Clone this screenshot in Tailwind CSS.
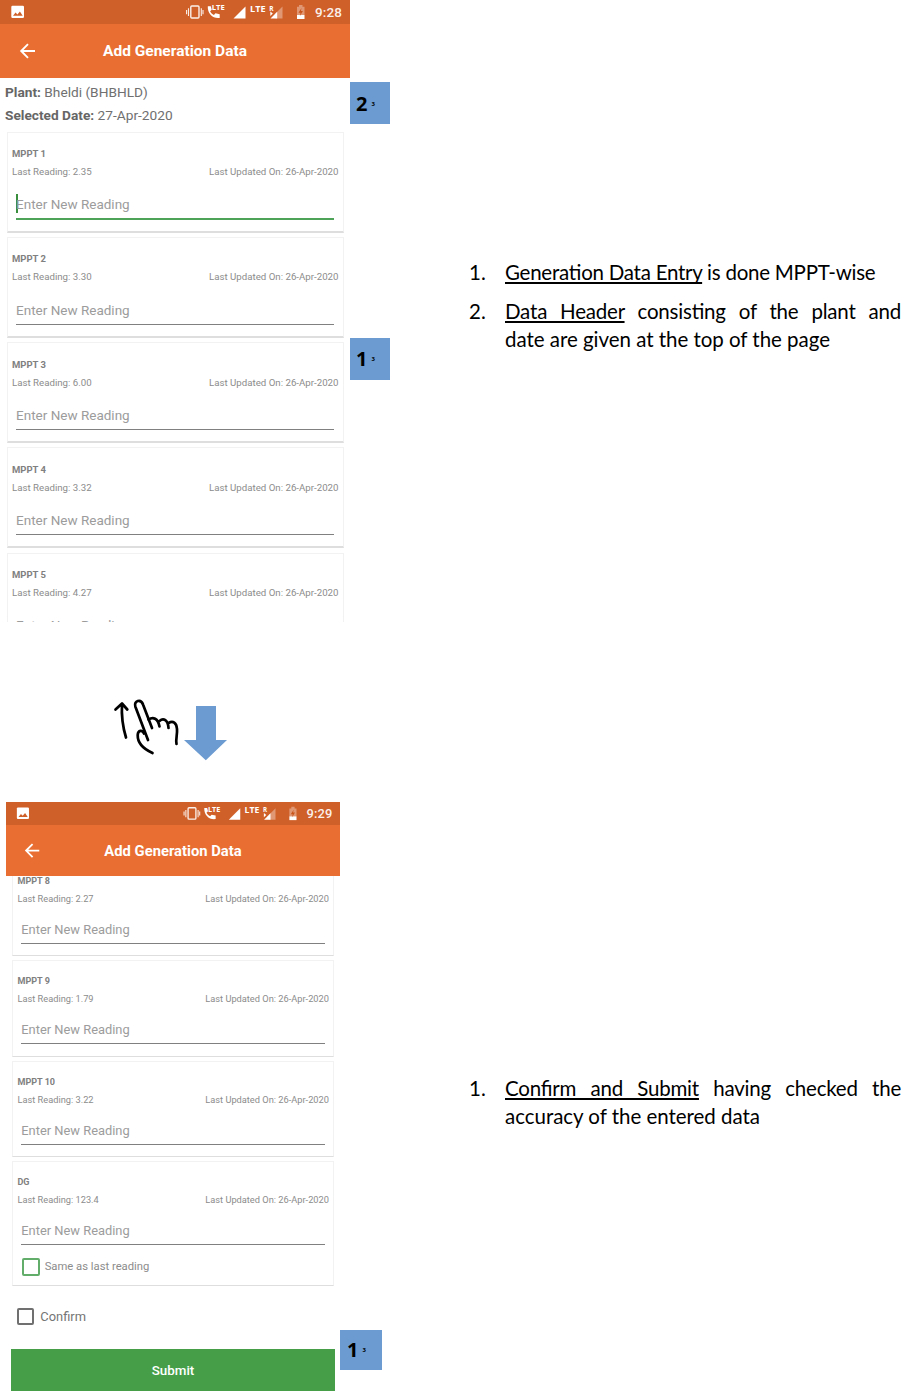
<!DOCTYPE html>
<html lang="en">
<head>
<meta charset="utf-8">
<title>Add Generation Data</title>
<script src="https://cdn.jsdelivr.net/npm/@tailwindcss/browser@4"></script>
</head>
<body class="bg-white w-[910px] h-[1396px] overflow-hidden font-['Roboto',sans-serif]">
<svg class="hidden">
  <symbol id="status" viewBox="0 0 350 24">
    <rect x="11.3" y="5.7" width="12.7" height="12.2" rx="1.2" fill="#fff"/>
    <path d="M13 15.7l2.6-3.1 1.8 1.9 2.5-3 2.8 4.2z" fill="#d06029"/>
    <g fill="none" stroke="#fff" stroke-opacity=".9">
      <rect x="190.8" y="6" width="8.2" height="12" rx="1" stroke-width="1.4"/>
      <path d="M188.5 8.3v7.6M186.6 10v4.2M201.3 8.3v7.6M203 10v4.2" stroke-width="1.1"/>
    </g>
    <path d="M207.8 6.200h3l.9 3.500-1.600 1.500c.9 1.700 2 2.800 3.800 3.700l1.600-1.600 4.200.9v3.700c-6.800.9-12.300-4.200-11.900-11.700z" fill="#fff"/>
    <path d="M233.500 18.500h12V6.500z" fill="#fff"/>
    <path d="M275.500 18.500h7V6.500l-7 7z" fill="#fff" fill-opacity=".35"/>
    <path d="M270.500 18.500h6.700v-6.700z" fill="#fff"/>
    <path d="M270.300 11.500v4.500l2.500-2.500z" fill="#fff"/>
    <path d="M297 6.800h2V5h3.500v1.800h2V15h-7.500z" fill="#fff" fill-opacity=".35"/>
    <path d="M297 15h7.500v4H297z" fill="#fff"/>
    <path d="M301.500 8l-3 4.800h2l-.6 3.200 3-5h-2z" fill="#c9541b"/>
    <g fill="#fff" font-family="Open Sans, sans-serif" font-weight="700">
      <text x="211.700" y="10.400" font-size="7.500" textLength="13" lengthAdjust="spacingAndGlyphs">LTE</text>
      <text x="250" y="12" font-size="9" textLength="15.500" lengthAdjust="spacingAndGlyphs">LTE</text>
      <text x="269.300" y="11" font-size="6.500">R</text>
    </g>
    <text x="315" y="17" font-size="13.500" font-family="Roboto, sans-serif" font-weight="500" fill="#fff" fill-opacity=".92" textLength="27" data-clock></text>
  </symbol>
</svg>

<main class="grid grid-cols-[390px_1fr] h-full">
  <div class="flex flex-col">
    <section class="flex h-[622px]">
      <div id="phone1" class="w-[350px] h-[621.5px] overflow-hidden flex flex-col"></div>
      <div class="w-10 pt-[82px] flex flex-col gap-[214px] font-['Open_Sans',sans-serif] font-bold text-black">
        <div class="h-[42px] bg-[#6b9bd1] flex items-center pl-1.5 pt-0.5 gap-1"><span class="text-[20px] leading-none">2</span><span class="text-[6px] leading-none">3</span></div>
        <div class="h-[42px] bg-[#6b9bd1] flex items-center pl-1.5 gap-1"><span class="text-[20px] leading-none">1</span><span class="text-[6px] leading-none">3</span></div>
      </div>
    </section>

    <div class="h-[180px] pt-[68px] pl-[100px]">
      <svg width="140" height="80" viewBox="0 0 140 80">
        <g fill="none" stroke="#000" stroke-width="2.700" stroke-linecap="round" stroke-linejoin="round">
          <path d="M26 47.500Q21 31 22 14M15.500 19.500L22 13.500l5.300 6"/>
          <path d="M48 50L35.300 16.500C33.500 10.500 41 8.500 43 14.500L52 38"/>
          <path d="M48.500 29.500C53 26.500 58 28 59.500 36.500M59.500 31C63.500 27.500 68 30 68.500 38M68.500 33C73 30.500 76.500 32.500 77 39C77.500 45 75.500 49 76.500 54"/>
          <path d="M44 43.500C42.500 39.500 38 40 37.700 45C37.500 53 43.500 59 52.500 63"/>
        </g>
        <path d="M96 16h20v34h11l-21.200 20.300L84 50h12z" fill="#6b9bd1"/>
      </svg>
    </div>

    <section class="flex pl-1.5 h-[594px]">
      <div id="phone2" class="w-[350px] h-[622px] shrink-0 overflow-hidden flex flex-col [zoom:0.9543]"></div>
      <div class="w-[42px] pt-[528px] font-['Open_Sans',sans-serif] font-bold text-black">
        <div class="h-10 bg-[#6b9bd1] flex items-center pl-[7px] gap-1"><span class="text-[20px] leading-none">1</span><span class="text-[6px] leading-none">3</span></div>
      </div>
    </section>
  </div>

  <div class="pl-[79px] pr-[9px] pt-[258px] font-['Lato',sans-serif] text-[20.5px] leading-7 text-black [font-feature-settings:'liga']">
    <ol class="flex flex-col gap-[11px]">
      <li class="grid grid-cols-[36px_1fr]"><span>1.</span><p class="whitespace-nowrap tracking-[-0.25px]"><u class="underline decoration-[1.5px] underline-offset-[2px] [text-decoration-skip-ink:none]">Generation Data Entry</u> is done MPPT-wise</p></li>
      <li class="grid grid-cols-[36px_1fr]"><span>2.</span><div><p class="[text-align-last:justify] whitespace-nowrap tracking-[-0.2px]"><u class="underline decoration-[1.5px] underline-offset-[2px] [text-decoration-skip-ink:none]">Data Header</u> consisting of the plant and</p><p class="tracking-[-0.03px]">date are given at the top of the page</p></div></li>
    </ol>
    <ol class="mt-[721px]">
      <li class="grid grid-cols-[36px_1fr]"><span>1.</span><div><p class="[text-align-last:justify] whitespace-nowrap tracking-[-0.2px]"><u class="underline decoration-[1.5px] underline-offset-[2px] [text-decoration-skip-ink:none]">Confirm and Submit</u> having checked the</p><p class="tracking-[-0.03px]">accuracy of the entered data</p></div></li>
    </ol>
  </div>
</main>

<script>
const statusArt = document.getElementById('status').innerHTML;
const header = (time) => `
  <header class="relative z-10 shrink-0 h-[78px] bg-[#e86f31] flex flex-col">
    <div class="h-6 bg-[#d06029]"><svg width="350" height="24" viewBox="0 0 350 24">${statusArt.replace('data-clock="">', '>' + time)}</svg></div>
    <div class="h-[54px] grid grid-cols-[50px_250px_50px] items-center">
      <svg class="ml-[19px]" width="18" height="18" viewBox="0 0 18 18" fill="none" stroke="#fff" stroke-width="1.900"><path d="M16 9H2.500M9 2.200L2.200 9 9 15.800"/></svg>
      <h1 class="pt-[2px] text-center text-white font-bold text-[15.500px] leading-none">Add Generation Data</h1>
    </div>
  </header>`;
const card = (name, reading, active, extra = '') => `
  <article class="w-[337px] ml-[6.500px] mb-[4.250px] shrink-0 bg-white border border-[#f2f2f2] border-b-2 border-b-[#dedede] ${extra ? 'h-[130.500px]' : 'h-[101px]'}">
    <h2 class="pl-[4.500px] pt-[14.500px] h-[30px] text-[9.500px] leading-[14px] font-bold text-[#808080]">${name}</h2>
    <div class="pl-[4.500px] pr-[4px] h-[27.500px] pt-[2.500px] flex justify-between text-[9.700px] leading-[14px] text-[#8c8c8c]"><span>Last Reading: ${reading}</span><span>Last Updated On: 26-Apr-2020</span></div>
    <div class="ml-[8.500px] mr-[8.500px] h-[29.500px] flex items-center text-[13.500px] leading-[20px] text-[#9c9c9c] ${active ? 'border-b-2 border-[#4da357]' : 'border-b-[1.500px] border-[#808080]'}">${active ? '<i class="w-[2px] h-[19px] bg-[#388e3c] -mr-[2px]"></i>' : ''}<span>Enter New Reading</span></div>
    ${extra}
  </article>`;
document.getElementById('phone1').innerHTML = header('9:28') + `
  <div class="shrink-0 h-[53.500px] pl-[5px] pt-[2.800px] text-[13.700px] leading-[23.500px] text-[#707070]">
    <p><b class="text-[#666666]">Plant:</b> Bheldi (BHBHLD)</p>
    <p><b class="text-[#666666]">Selected Date:</b> 27-Apr-2020</p>
  </div>` +
  card('MPPT 1', '2.35', true) + card('MPPT 2', '3.30') + card('MPPT 3', '6.00') + card('MPPT 4', '3.32') + card('MPPT 5', '4.27');
document.getElementById('phone2').innerHTML = header('9:29') + `
  <div class="-mt-[17.200px] flex flex-col">` +
  card('MPPT 8', '2.27') + card('MPPT 9', '1.79') + card('MPPT 10', '3.22') +
  card('DG', '123.4', false, '<label class="flex items-center gap-[5px] pl-[9.500px] pt-[12.500px] text-[11.800px] leading-[20px] text-[#8c8c8c]"><i class="w-[18.500px] h-[18.500px] rounded-[2px] border-[2.200px] border-[#62ad6a]"></i>Same as last reading</label>') + `
    <label class="flex items-center gap-[6.500px] pl-[11.500px] mt-[14.800px] h-[26px] text-[13.500px] text-[#757575]"><i class="w-[18px] h-[18px] rounded-[2px] border-[2.200px] border-[#707070]"></i>Confirm</label>
    <button class="ml-[5px] mt-[21.300px] pt-[3px] w-[340px] h-[44px] bg-[#469f48] text-white font-medium text-[14px]">Submit</button>
  </div>`;
</script>
</body>
</html>
